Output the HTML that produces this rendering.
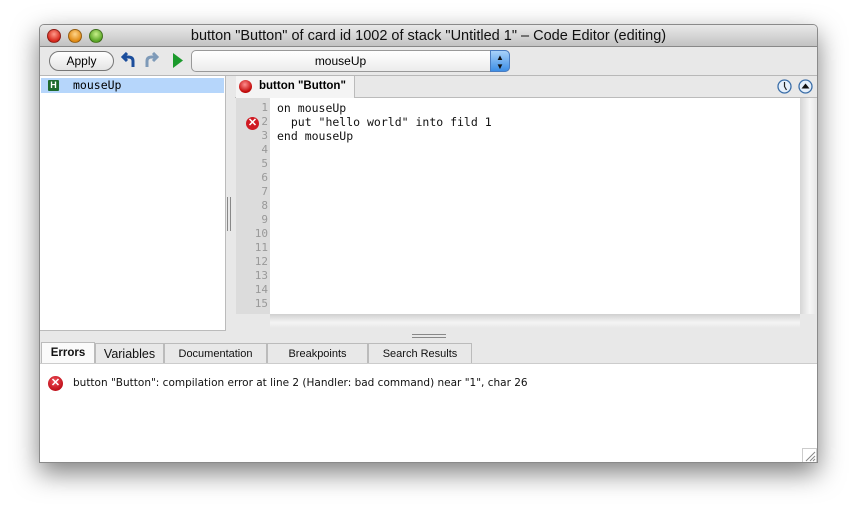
<!DOCTYPE html>
<html><head><style>
*{margin:0;padding:0;box-sizing:border-box}
body{width:857px;height:517px;background:#fff;position:relative;overflow:hidden;font-family:"Liberation Sans",sans-serif}
.win{position:absolute;left:39px;top:24px;width:779px;height:439px;background:#e8e8e8;border:1px solid #8a8a8a;box-shadow:0 10px 26px rgba(0,0,0,.5);border-radius:5px 5px 0 0;overflow:hidden}
.title{position:absolute;left:0;top:0;width:100%;height:22px;background:linear-gradient(#e9e9e9,#c2c2c2);border-bottom:1px solid #888;text-align:center;font-size:14.5px;line-height:22px;color:#111}
.light{position:absolute;top:4px;width:14px;height:14px;border-radius:50%;border:1px solid rgba(0,0,0,.35)}
.tb{position:absolute;top:22px;left:0;width:100%;height:29px;background:#e8e8e8;border-bottom:1px solid #b8b8b8}
.abs{position:absolute}
.mono{font-family:"DejaVu Sans Mono","Liberation Mono",monospace;font-size:11.5px}
.ln{position:absolute;left:0;width:32px;text-align:right;color:#999;font-family:"DejaVu Sans Mono",monospace;font-size:11px}
.tab{position:absolute;top:318px;height:21px;border:1px solid #bbb;border-bottom:none;background:#e8e8e8;font-size:11px;text-align:center;line-height:20px;color:#111}
</style></head><body>
<div class="win">
 <div class="title">button "Button" of card id 1002 of stack "Untitled 1" – Code Editor (editing)
  <div class="light" style="left:7px;background:radial-gradient(circle at 50% 35%,#ff9a8a,#d5261b 70%)"></div>
  <div class="light" style="left:28px;background:radial-gradient(circle at 50% 35%,#ffd58a,#e08a14 70%)"></div>
  <div class="light" style="left:49px;background:radial-gradient(circle at 50% 35%,#c8f08a,#5aa626 70%)"></div>
 </div>
 <div class="tb">
  <div class="abs" style="left:9px;top:4px;width:65px;height:20px;border:1px solid #777;border-radius:10px;background:linear-gradient(#fff,#e4e4e4);font-size:12px;text-align:center;line-height:18px">Apply</div>
  <svg class="abs" style="left:80px;top:5px" width="16" height="18"><path d="M13 15 V9 Q13 5 8 5 H4 M7 1 L3 5 L7 9" fill="none" stroke="#1c4e9c" stroke-width="3"/></svg>
  <svg class="abs" style="left:104px;top:5px" width="16" height="18"><path d="M3 15 V9 Q3 5 8 5 H12 M9 1 L13 5 L9 9" fill="none" stroke="#7e9ab8" stroke-width="3"/></svg>
  <svg class="abs" style="left:131px;top:5px" width="14" height="18"><path d="M2 1 L12 8.5 L2 16Z" fill="#1b9a2c"/></svg>
  <div class="abs" style="left:151px;top:3px;width:319px;height:22px;border:1px solid #999;border-radius:5px;background:linear-gradient(#fff,#ececec);font-size:12px;text-align:center;line-height:20px;padding-right:20px">mouseUp
   <div class="abs" style="right:-1px;top:-1px;width:20px;height:22px;border-radius:0 5px 5px 0;background:linear-gradient(#a9d2fa,#3d8ee6);border:1px solid #4a7cc0;color:#111;font-size:8px;line-height:9px;padding-top:2px;text-align:center">▲<br>▼</div>
  </div>
 </div>
 <div class="abs" style="left:0;top:51px;width:186px;height:255px;background:#fff;border-right:1px solid #bbb;border-bottom:1px solid #bbb">
  <div class="abs" style="left:1px;top:2px;width:183px;height:15px;background:#b6d6fb"></div>
  <div class="abs" style="left:8px;top:4px;width:11px;height:11px;background:#1e6a2e;color:#fff;font-size:9px;font-weight:bold;text-align:center;line-height:11px;border-radius:1px">H</div>
  <div class="abs mono" style="left:33px;top:2px;line-height:15px">mouseUp</div>
 </div>
 <div class="abs" style="left:187px;top:172px;width:4px;height:34px;border-left:1px solid #888;border-right:1px solid #888"></div>
 <div class="abs" style="left:195px;top:51px;width:583px;height:22px;border-bottom:1px solid #bbb"></div>
 <div class="abs" style="left:196px;top:51px;width:119px;height:22px;background:#f4f4f4;border-right:1px solid #bbb;font-size:11.5px;font-weight:bold;line-height:21px;padding-left:23px">button "Button"
  <div class="abs" style="left:3px;top:4px;width:13px;height:13px;border-radius:50%;background:radial-gradient(circle at 45% 35%,#ff8f8f,#c40d0d 65%,#800)"></div>
 </div>
 <svg class="abs" style="left:737px;top:54px" width="15" height="15"><circle cx="7.5" cy="7.5" r="6.5" fill="#e6f0fb" stroke="#3b6ea8" stroke-width="1.3"/><path d="M7.5 3 V7.5 L9.5 11" fill="none" stroke="#222" stroke-width="1.2"/></svg>
 <svg class="abs" style="left:758px;top:54px" width="15" height="15"><circle cx="7.5" cy="7.5" r="6.5" fill="#e6f0fb" stroke="#3b6ea8" stroke-width="1.3"/><path d="M3.5 9.5 L7.5 4.5 L11.5 9.5Z" fill="#111"/></svg>
 <div class="abs" style="left:196px;top:73px;width:34px;height:216px;background:#dcdcdc">
  <div class="ln" style="top:3px;line-height:14px">1<br>2<br>3<br>4<br>5<br>6<br>7<br>8<br>9<br>10<br>11<br>12<br>13<br>14<br>15</div>
  <div class="abs" style="left:10px;top:19px;width:13px;height:13px;border-radius:50%;background:#d01a22;color:#fff;font-size:11px;font-weight:bold;line-height:13px;text-align:center">✕</div>
 </div>
 <div class="abs" style="left:230px;top:73px;width:530px;height:216px;background:#fff">
  <div class="abs mono" style="left:7px;top:3px;line-height:14px;white-space:pre;color:#111">on mouseUp
  put "hello world" into fild 1
end mouseUp</div>
 </div>
 <div class="abs" style="left:760px;top:73px;width:16px;height:216px;background:linear-gradient(90deg,#d6d6d6,#f6f6f6 60%,#e8e8e8)"></div>
 <div class="abs" style="left:230px;top:289px;width:530px;height:14px;background:linear-gradient(#d0d0d0,#f4f4f4 60%,#e8e8e8)"></div>
 <div class="abs" style="left:372px;top:309px;width:34px;height:4px;border-top:1px solid #888;border-bottom:1px solid #888"></div>
 <div class="tab" style="left:1px;width:54px;background:#fafafa;font-weight:bold;font-size:11.5px;top:317px;height:22px">Errors</div>
 <div class="tab" style="left:55px;width:69px;font-size:12.5px">Variables</div>
 <div class="tab" style="left:124px;width:103px">Documentation</div>
 <div class="tab" style="left:227px;width:101px">Breakpoints</div>
 <div class="tab" style="left:328px;width:104px">Search Results</div>
 <div class="abs" style="left:0;top:338px;width:778px;height:100px;background:#fff;border-top:1px solid #ccc">
  <div class="abs" style="left:8px;top:12px;width:15px;height:15px;border-radius:50%;background:radial-gradient(circle at 45% 35%,#f0505a,#c0101a 70%);color:#fff;font-size:11px;font-weight:bold;line-height:15px;text-align:center">✕</div>
  <div class="abs" style="left:33px;top:12px;line-height:15px;color:#111;font-family:'DejaVu Sans',sans-serif;font-size:10.5px;white-space:nowrap">button "Button": compilation error at line 2 (Handler: bad command) near "1", char 26</div>
  <svg class="abs" style="left:762px;top:84px" width="15" height="15"><rect x=".5" y=".5" width="14" height="14" fill="#fff" stroke="#ccc"/><path d="M4 13 L13 4 M8 13 L13 8 M11 13 L13 11" stroke="#888"/></svg>
 </div>
</div>
</body></html>
